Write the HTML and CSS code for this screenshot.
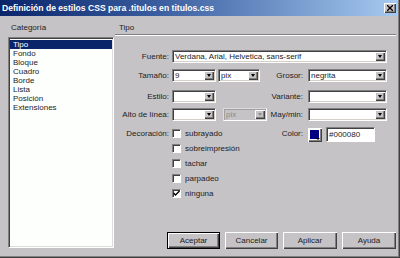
FILE: index.html
```html
<!DOCTYPE html>
<html lang="es">
<head>
<meta charset="utf-8">
<link rel="stylesheet" href="styles.css">
</head>
<body>
<div class="window">
  <div class="titlebar">
    <span class="title">Definición de estilos CSS para .titulos en titulos.css</span>
    <span class="close"><svg width="6" height="6" viewBox="0 0 6 6"><path d="M0 0L6 6M6 0L0 6" stroke="#000" stroke-width="1.3"/></svg></span>
  </div>
  <div class="body">
    <div class="left">
      <div class="head">Categoría</div>
      <ul class="list">
        <li class="on">Tipo</li>
        <li>Fondo</li>
        <li>Bloque</li>
        <li>Cuadro</li>
        <li>Borde</li>
        <li>Lista</li>
        <li>Posición</li>
        <li>Extensiones</li>
      </ul>
    </div>
    <div class="right">
      <div class="head head-tipo">Tipo</div>
      <div class="rule"></div>
      <div class="form">
        <div class="row r1">
          <span class="lab">Fuente:</span>
          <span class="sel w-font"><span class="val">Verdana, Arial, Helvetica, sans-serif</span><span class="dd"><i></i></span></span>
        </div>
        <div class="row r2">
          <span class="lab">Tamaño:</span>
          <span class="sel w-a"><span class="val">9</span><span class="dd"><i></i></span></span>
          <span class="sel w-b"><span class="val">pix</span><span class="dd"><i></i></span></span>
          <span class="lab2 l2-a">Grosor:</span>
          <span class="sel w-c"><span class="val">negrita</span><span class="dd"><i></i></span></span>
        </div>
        <div class="row r3">
          <span class="lab">Estilo:</span>
          <span class="sel w-a"><span class="val"></span><span class="dd"><i></i></span></span>
          <span class="spacer"></span>
          <span class="lab2 l2-a">Variante:</span>
          <span class="sel w-c"><span class="val"></span><span class="dd"><i></i></span></span>
        </div>
        <div class="row r4">
          <span class="lab">Alto de línea:</span>
          <span class="sel w-a"><span class="val"></span><span class="dd"><i></i></span></span>
          <span class="sel dis w-d"><span class="val">pix</span><span class="dd"><i></i></span></span>
          <span class="lab2 l2-b">May/min:</span>
          <span class="sel w-c"><span class="val"></span><span class="dd"><i></i></span></span>
        </div>
        <div class="deco">
          <span class="lab lab-deco">Decoración:</span>
          <div class="checks">
            <div class="chk"><span class="box"></span>subrayado</div>
            <div class="chk"><span class="box"></span>sobreimpresión</div>
            <div class="chk"><span class="box"></span>tachar</div>
            <div class="chk"><span class="box"></span>parpadeo</div>
            <div class="chk"><span class="box"><svg width="7" height="7" viewBox="0 0 7 7"><path d="M0.5 3L2.5 5L6.5 1" fill="none" stroke="#000" stroke-width="1.4"/></svg></span>ninguna</div>
          </div>
          <span class="lab2 l2-c">Color:</span>
          <span class="swatch"><span class="chip"></span><span class="tri"></span></span>
          <span class="txt">#000080</span>
        </div>
      </div>
      <div class="buttons">
        <span class="btn def w53">Aceptar</span>
        <span class="btn w53">Cancelar</span>
        <span class="btn w54">Aplicar</span>
        <span class="btn w54">Ayuda</span>
      </div>
    </div>
  </div>
</div>
</body>
</html>
```

FILE: styles.css
```css
* { box-sizing: border-box; }
html, body { margin: 0; padding: 0; }
body {
  width: 400px;
  height: 258px;
  overflow: hidden;
  background: #c6c3c6;
  font-family: "Liberation Sans", Arial, sans-serif;
  font-size: 8px;
  color: #1c1c1c;
}
.window {
  width: 400px;
  height: 258px;
  background: #c6c3c6;
  box-shadow: inset -1px -1px 0 #404040, inset -2px -2px 0 #808080;
  display: flex;
  flex-direction: column;
}
.titlebar {
  height: 16px;
  margin-right: 2px;
  background: linear-gradient(to right, #0a246a 0%, #3a5ea0 40%, #a6caf0 100%);
  display: flex;
  align-items: center;
  padding-left: 2px;
  padding-right: 2px;
}
.title {
  flex: 1;
  color: #fff;
  font-weight: bold;
  font-size: 8.6px;
  white-space: nowrap;
}
.close {
  width: 12px;
  height: 10px;
  background: #c6c3c6;
  box-shadow: inset 1px 1px 0 #fff, inset -1px -1px 0 #404040, inset -2px -2px 0 #808080;
  display: flex;
  align-items: center;
  justify-content: center;
  padding-bottom: 1px;
}
.body {
  flex: 1;
  display: flex;
  padding: 6px 3px 9px 8px;
}
.left {
  width: 106px;
  display: flex;
  flex-direction: column;
}
.head {
  height: 12px;
  line-height: 12px;
  padding-left: 3px;
  white-space: nowrap;
}
.list {
  list-style: none;
  margin: 3px 0 0;
  padding: 2px 1px;
  height: 211px;
  background: #fcfffc;
  border: 1px solid;
  border-color: #808080 #fff #fff #808080;
  box-shadow: inset 1px 1px 0 #404040, inset -1px -1px 0 #dcdcdc;
}
.list li {
  height: 9px;
  line-height: 9px;
  padding-left: 3px;
  white-space: nowrap;
}
.list li.on {
  background: #0a246a;
  color: #fff;
}
.right {
  flex: 1;
  margin-left: 1px;
  display: flex;
  flex-direction: column;
}
.head-tipo { padding-left: 4px; }
.rule {
  height: 2px;
  border-top: 1px solid #808080;
  border-bottom: 1px solid #fff;
  margin-right: 1px;
}
.form {
  display: flex;
  flex-direction: column;
  margin-top: 14px;
}
.row {
  display: flex;
  align-items: center;
  height: 13px;
}
.r2 { margin-top: 6px; }
.r3 { margin-top: 8px; }
.r4 { margin-top: 5px; }
.lab {
  width: 54px;
  margin-right: 3px;
  text-align: right;
  white-space: nowrap;
}
.lab2 {
  text-align: right;
  white-space: nowrap;
  margin-right: 5px;
}
.l2-a { width: 43px; }
.l2-b { width: 36px; }
.l2-c { width: 43px; line-height: 15px; }
.sel {
  height: 13px;
  display: flex;
  align-items: center;
  background: #fff;
  border: 1px solid;
  border-color: #808080 #fff #fff #808080;
  box-shadow: inset 1px 1px 0 #404040, inset -1px -1px 0 #d4d0c8;
  padding: 1px 1px 1px 2px;
}
.sel .val {
  flex: 1;
  white-space: nowrap;
  overflow: hidden;
  line-height: 9px;
}
.dd {
  width: 10px;
  height: 9px;
  background: #c6c3c6;
  box-shadow: inset 1px 1px 0 #fff, inset -1px -1px 0 #404040, inset -2px -2px 0 #808080;
  display: flex;
  align-items: center;
  justify-content: center;
  padding-bottom: 1px;
}
.dd i {
  width: 0;
  height: 0;
  border-left: 2.5px solid transparent;
  border-right: 2.5px solid transparent;
  border-top: 3px solid #000;
}
.w-font { width: 215px; }
.w-a { width: 44px; }
.w-b { width: 42px; margin-left: 2px; }
.w-c { width: 79px; }
.w-d { width: 44px; margin-left: 7px; }
.spacer { width: 44px; }
.sel.dis {
  background: #c6c3c6;
  border-color: #dcdcdc #fff #fff #dcdcdc;
  box-shadow: inset 1px 1px 0 #a0a0a0, inset -1px -1px 0 #c6c3c6;
  color: #8a8a8a;
}
.sel.dis .dd i { border-top-color: #8a8a8a; }
.deco {
  display: flex;
  align-items: flex-start;
  margin-top: 5px;
}
.lab-deco { line-height: 15px; }
.checks {
  width: 88px;
  display: flex;
  flex-direction: column;
}
.chk {
  height: 15px;
  display: flex;
  align-items: center;
  white-space: nowrap;
}
.box {
  width: 9px;
  height: 9px;
  margin-right: 4px;
  background: #fff;
  border: 1px solid;
  border-color: #808080 #fff #fff #808080;
  box-shadow: inset 1px 1px 0 #404040;
  display: flex;
  align-items: center;
  justify-content: center;
}
.swatch {
  width: 14px;
  height: 14px;
  margin-top: 2px;
  margin-right: 4px;
  background: #fff;
  box-shadow: inset 1px 1px 0 #fff, inset -1px -1px 0 #404040, inset -2px -2px 0 #808080;
  display: flex;
  padding: 2px 0 0 2px;
  position: relative;
}
.chip {
  width: 9px;
  height: 9px;
  background: #000080;
}
.tri {
  position: absolute;
  right: 2px;
  bottom: 2px;
  width: 0;
  height: 0;
  border-left: 2px solid transparent;
  border-right: 2px solid transparent;
  border-top: 2px solid #000;
}
.txt {
  width: 49px;
  height: 15px;
  margin-top: 1px;
  background: #fff;
  border: 1px solid;
  border-color: #808080 #fff #fff #808080;
  box-shadow: inset 1px 1px 0 #404040;
  padding-left: 2px;
  line-height: 13px;
}
.buttons {
  margin-top: auto;
  display: flex;
  justify-content: flex-end;
  gap: 5px;
  padding-right: 1px;
}
.btn {
  height: 17px;
  line-height: 17px;
  text-align: center;
  background: #c6c3c6;
  box-shadow: inset 1px 1px 0 #fff, inset -1px -1px 0 #404040, inset -2px -2px 0 #808080;
}
.btn.def {
  border: 1px solid #000;
  line-height: 15px;
}
.w53 { width: 53px; }
.w54 { width: 54px; }
```
